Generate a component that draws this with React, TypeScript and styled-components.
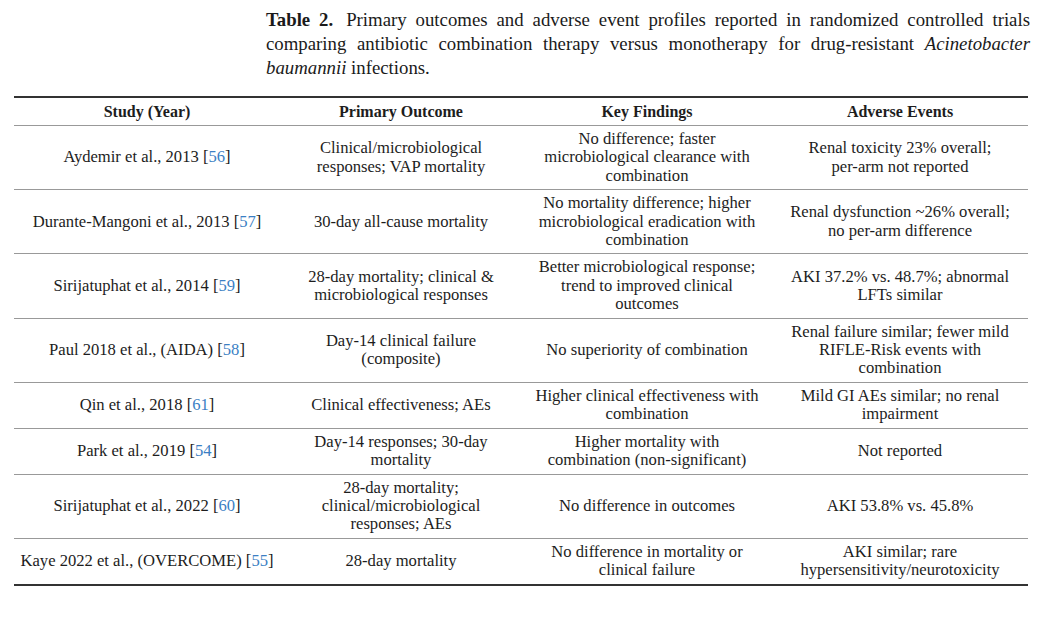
import React from 'react';
import styled, { createGlobalStyle } from 'styled-components';

const GlobalStyle = createGlobalStyle`
  html, body {
    margin: 0;
    padding: 0;
    background: #fff;
  }
  body {
    font-family: "Liberation Serif", "Times New Roman", serif;
    color: #1d1d1d;
  }
`;

type Row = {
  study: string;
  ref: string;
  outcome: string[];
  findings: string[];
  adverse: string[];
};

const rows: Row[] = [
  {
    study: 'Aydemir et al., 2013',
    ref: '56',
    outcome: ['Clinical/microbiological', 'responses; VAP mortality'],
    findings: ['No difference; faster', 'microbiological clearance with', 'combination'],
    adverse: ['Renal toxicity 23% overall;', 'per-arm not reported'],
  },
  {
    study: 'Durante-Mangoni et al., 2013',
    ref: '57',
    outcome: ['30-day all-cause mortality'],
    findings: ['No mortality difference; higher', 'microbiological eradication with', 'combination'],
    adverse: ['Renal dysfunction ~26% overall;', 'no per-arm difference'],
  },
  {
    study: 'Sirijatuphat et al., 2014',
    ref: '59',
    outcome: ['28-day mortality; clinical &', 'microbiological responses'],
    findings: ['Better microbiological response;', 'trend to improved clinical', 'outcomes'],
    adverse: ['AKI 37.2% vs. 48.7%; abnormal', 'LFTs similar'],
  },
  {
    study: 'Paul 2018 et al., (AIDA)',
    ref: '58',
    outcome: ['Day-14 clinical failure', '(composite)'],
    findings: ['No superiority of combination'],
    adverse: ['Renal failure similar; fewer mild', 'RIFLE-Risk events with', 'combination'],
  },
  {
    study: 'Qin et al., 2018',
    ref: '61',
    outcome: ['Clinical effectiveness; AEs'],
    findings: ['Higher clinical effectiveness with', 'combination'],
    adverse: ['Mild GI AEs similar; no renal', 'impairment'],
  },
  {
    study: 'Park et al., 2019',
    ref: '54',
    outcome: ['Day-14 responses; 30-day', 'mortality'],
    findings: ['Higher mortality with', 'combination (non-significant)'],
    adverse: ['Not reported'],
  },
  {
    study: 'Sirijatuphat et al., 2022',
    ref: '60',
    outcome: ['28-day mortality;', 'clinical/microbiological', 'responses; AEs'],
    findings: ['No difference in outcomes'],
    adverse: ['AKI 53.8% vs. 45.8%'],
  },
  {
    study: 'Kaye 2022 et al., (OVERCOME)',
    ref: '55',
    outcome: ['28-day mortality'],
    findings: ['No difference in mortality or', 'clinical failure'],
    adverse: ['AKI similar; rare', 'hypersensitivity/neurotoxicity'],
  },
];

const Page = styled.div`
  width: 1047px;
  height: 619px;
  padding-top: 8px;
  box-sizing: border-box;
`;

const Caption = styled.div`
  margin-left: 266px;
  width: 764px;
  font-size: 18.8px;
  line-height: 24px;
  color: #1a1a1a;

  b {
    font-weight: 700;
    margin-right: 4px;
  }
`;

// each caption line is laid out on its own; all but the last are justified
const CaptionLine = styled.div<{ $last?: boolean }>`
  white-space: nowrap;
  text-align: ${(p) => (p.$last ? 'left' : 'justify')};
  text-align-last: ${(p) => (p.$last ? 'left' : 'justify')};
`;

const Table = styled.table`
  margin: 16px 0 0 14px;
  width: 1014px;
  border-collapse: collapse;
  table-layout: fixed;
  border-top: 2px solid #333;
  border-bottom: 2px solid #333;
  font-size: 16.6px;
`;

const Col = styled.col<{ $w: number }>`
  width: ${(p) => p.$w}px;
`;

const HeadCell = styled.th`
  font-weight: 700;
  font-size: 16px;
  text-align: center;
  height: 27px;
  padding: 0;
  line-height: 18px;
  border-bottom: 1.5px solid #999;
  vertical-align: middle;
`;

const BodyRow = styled.tr`
  border-bottom: 1.5px solid #999;

  &:last-child {
    border-bottom: none;
  }
`;

const Cell = styled.td`
  text-align: center;
  vertical-align: middle;
  padding: 4px 2px;
  line-height: 18.4px;
  white-space: nowrap;
`;

const RefLink = styled.span`
  color: #3b7fc4;
`;

const Lines = ({ lines }: { lines: string[] }) => (
  <>
    {lines.map((l, i) => (
      <React.Fragment key={i}>
        {i > 0 && <br />}
        {l}
      </React.Fragment>
    ))}
  </>
);

export default function App() {
  return (
    <Page>
      <GlobalStyle />
      <Caption>
        <CaptionLine>
          <b>Table 2.</b> Primary outcomes and adverse event profiles reported in randomized controlled trials
        </CaptionLine>
        <CaptionLine>
          comparing antibiotic combination therapy versus monotherapy for drug-resistant <i>Acinetobacter</i>
        </CaptionLine>
        <CaptionLine $last>
          <i>baumannii</i> infections.
        </CaptionLine>
      </Caption>
      <Table>
        <colgroup>
          <Col $w={266} />
          <Col $w={242} />
          <Col $w={250} />
          <Col $w={256} />
        </colgroup>
        <thead>
          <tr>
            <HeadCell>Study (Year)</HeadCell>
            <HeadCell>Primary Outcome</HeadCell>
            <HeadCell>Key Findings</HeadCell>
            <HeadCell>Adverse Events</HeadCell>
          </tr>
        </thead>
        <tbody>
          {rows.map((r) => (
            <BodyRow key={r.study}>
              <Cell>
                {r.study} [<RefLink>{r.ref}</RefLink>]
              </Cell>
              <Cell>
                <Lines lines={r.outcome} />
              </Cell>
              <Cell>
                <Lines lines={r.findings} />
              </Cell>
              <Cell>
                <Lines lines={r.adverse} />
              </Cell>
            </BodyRow>
          ))}
        </tbody>
      </Table>
    </Page>
  );
}
